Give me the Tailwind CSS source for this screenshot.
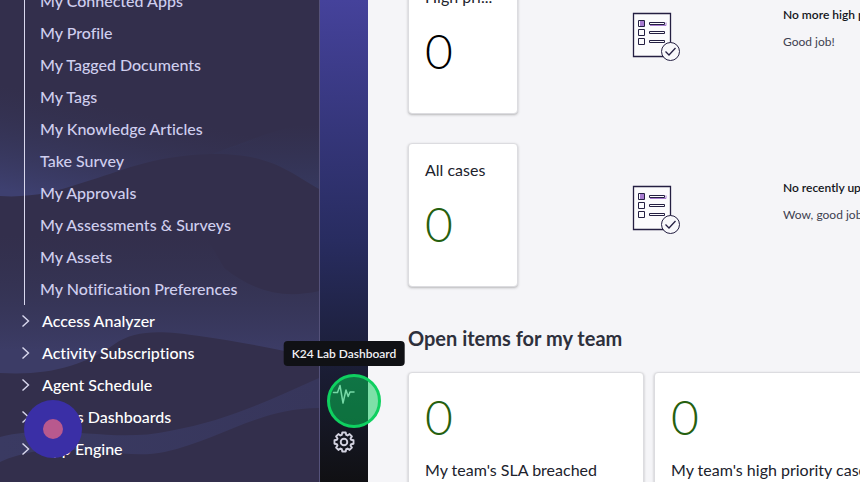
<!DOCTYPE html>
<html lang="en">
<head>
<meta charset="utf-8">
<title>Workspace</title>
<script src="https://cdn.jsdelivr.net/npm/@tailwindcss/browser@4"></script>
</head>
<body class="flex h-screen overflow-hidden bg-[#f5f5f8] font-[Lato,'Noto_Sans',sans-serif] text-[#20222c] [font-variant-ligatures:no-common-ligatures]">

<aside class="relative isolate w-80 shrink-0 overflow-hidden border-r border-[#55527a] bg-[#332f4c]">
  <svg class="absolute inset-0 -z-10 h-full w-full" viewBox="0 0 320 482" preserveAspectRatio="none" aria-hidden="true">
    <defs>
      <linearGradient id="w1" gradientUnits="userSpaceOnUse" x1="50" y1="95" x2="30" y2="195"><stop offset="0" stop-color="#35375a" stop-opacity="0"/><stop offset="1" stop-color="#3e4070"/></linearGradient>
      <linearGradient id="w2" gradientUnits="userSpaceOnUse" x1="0" y1="235" x2="0" y2="350"><stop offset="0" stop-color="#343656" stop-opacity="0"/><stop offset="1" stop-color="#3c3c66"/></linearGradient>
      <linearGradient id="w3" gradientUnits="userSpaceOnUse" x1="0" y1="0" x2="320" y2="0"><stop offset="0" stop-color="#3a3a62"/><stop offset="1" stop-color="#37365b"/></linearGradient>
      <linearGradient id="w4" gradientUnits="userSpaceOnUse" x1="0" y1="125" x2="0" y2="188"><stop offset="0" stop-color="#34365a" stop-opacity="0"/><stop offset="1" stop-color="#36385e"/></linearGradient>
    </defs>
    <path fill="url(#w1)" d="M0 60 L200 60 L320 125 C270 138 240 145 212 154 C150 156 120 172 85 182 C55 192 30 198 0 196Z"/>
    <path fill="url(#w4)" d="M212 154 C240 145 270 130 320 120 V189 C290 172 270 153 212 154Z"/>
    <path fill="url(#w2)" d="M0 225 L200 225 L225 268 C255 292 285 299 320 291 V358 C290 352 250 343 200 336 C160 330 135 330 115 344 C85 365 50 376 0 373Z"/>
    <path fill="url(#w3)" d="M0 437 C60 422 110 444 170 431 C230 420 270 400 320 378 V408 C260 408 220 440 165 452 C120 462 60 435 0 462Z"/>
  </svg>
  <nav aria-label="All applications" class="-mt-[15px] font-medium">
    <ul class="ml-6 border-l border-[#d9d8ee] pl-[15px] text-base leading-8 text-[#cfceee]">
      <li><a href="#">My Connected Apps</a></li>
      <li><a href="#">My Profile</a></li>
      <li><a href="#">My Tagged Documents</a></li>
      <li><a href="#">My Tags</a></li>
      <li><a href="#">My Knowledge Articles</a></li>
      <li><a href="#">Take Survey</a></li>
      <li><a href="#">My Approvals</a></li>
      <li><a href="#">My Assessments &amp; Surveys</a></li>
      <li><a href="#">My Assets</a></li>
      <li><a href="#">My Notification Preferences</a></li>
    </ul>
    <ul class="pl-5 text-base leading-8 text-white">
      <li><button class="flex items-center gap-2.5"><svg class="h-3 w-3" viewBox="0 0 12 12" fill="none" stroke="#d9d8ee" stroke-width="1.4"><path d="M2.5 .5 8.5 6 2.5 11.5"/></svg>Access Analyzer</button></li>
      <li><button class="flex items-center gap-2.5"><svg class="h-3 w-3" viewBox="0 0 12 12" fill="none" stroke="#d9d8ee" stroke-width="1.4"><path d="M2.5 .5 8.5 6 2.5 11.5"/></svg>Activity Subscriptions</button></li>
      <li><button class="flex items-center gap-2.5"><svg class="h-3 w-3" viewBox="0 0 12 12" fill="none" stroke="#d9d8ee" stroke-width="1.4"><path d="M2.5 .5 8.5 6 2.5 11.5"/></svg>Agent Schedule</button></li>
      <li><button class="flex items-center gap-2.5"><svg class="h-3 w-3" viewBox="0 0 12 12" fill="none" stroke="#d9d8ee" stroke-width="1.4"><path d="M2.5 .5 8.5 6 2.5 11.5"/></svg>Alerts Dashboards</button></li>
      <li><button class="flex items-center gap-2.5"><svg class="h-3 w-3" viewBox="0 0 12 12" fill="none" stroke="#d9d8ee" stroke-width="1.4"><path d="M2.5 .5 8.5 6 2.5 11.5"/></svg>App Engine</button></li>
    </ul>
  </nav>
  <button aria-label="Record" class="absolute bottom-6 left-6 flex size-[58px] items-center justify-center rounded-full bg-[#3a2fa6]"><span class="size-5 rounded-full bg-[#b8598e]"></span></button>
</aside>

<div class="relative z-10 flex w-12 shrink-0 flex-col items-center justify-end gap-4 bg-linear-to-b from-[#45429b] via-[#282c60] to-[#101013] pb-6">
  <button aria-label="K24 Lab Dashboard" class="relative flex size-8 items-center justify-center">
    <svg class="h-5 w-6" viewBox="0 0 24 20" fill="none" stroke="#e6e6f4" stroke-width="1.500" stroke-linejoin="round" stroke-linecap="round"><path d="M1.500 8.500H5.500L8 1.500 11 19 14 6 16.200 12.500 18 8H22"/></svg>
    <span class="absolute -top-1 -left-px size-[54px] rounded-full border-[3px] border-[#0fd060] bg-[#05cc58]/50"></span>
    <span role="tooltip" class="absolute -top-[37px] left-1/2 -translate-x-1/2 rounded bg-[#101115] px-2 text-xs leading-[25px] font-semibold whitespace-nowrap text-[#f0f0f4]">K24 Lab Dashboard</span>
  </button>
  <button aria-label="Settings" class="flex size-8 items-center justify-center">
    <svg class="size-[22px]" viewBox="0 0 22 22" fill="none" stroke="#d2d1df" stroke-width="1.900" stroke-linejoin="round"><path d="M9.300 1.500h3.400l.5 2.400 1.300.6 2.100-1.400 2.300 2.300-1.400 2.100.6 1.300 2.400.5v3.400l-2.400.5-.6 1.300 1.400 2.100-2.300 2.300-2.100-1.400-1.300.6-.5 2.400H9.300l-.5-2.400-1.300-.6-2.100 1.400-2.300-2.300 1.400-2.100-.6-1.300-2.400-.5V9.300l2.400-.5.6-1.300-1.400-2.100 2.300-2.300 2.100 1.400 1.300-.6z"/><circle cx="11" cy="11" r="3.300"/></svg>
  </button>
</div>

<main class="min-w-0 flex-1 overflow-hidden pl-10">
  <div class="-mt-[30px] flex flex-col gap-[29px]">
    <section class="flex">
      <a href="#" class="block h-36 w-[110px] shrink-0 rounded border border-[#dcdce0] bg-white px-4 pt-4 shadow-sm shadow-black/20">
        <h3 class="text-base leading-5">High pri...</h3>
        <p class="mt-3.5 text-5xl leading-[60px] font-light text-black">0</p>
      </a>
      <svg class="mt-[42px] ml-[114px] h-[50px] w-12 shrink-0" viewBox="0 0 48 50" fill="none" stroke="#241f42"><path d="M1.500 1.500h37v43h-37z" fill="#fbfbfd" stroke-width="1.300"/><path d="M8 9h5v5H8z" fill="#a77bd0" stroke="none"/><path d="M6.500 8.500h6v6h-6zM6.500 17.500h6v6h-6zM6.500 26.500h6v6h-6zM17.500 10.500h15v2h-15zM17.500 19.500h15v2h-15zM17.500 28.500h15v2h-15z"/><path d="M18 13.500h16v-3" stroke="#a77bd0"/><circle cx="38.500" cy="39.500" r="9" fill="#f8f8fb"/><path d="M33.500 39.500 37 43l6.500-7" stroke-width="1.300"/></svg>
      <div class="mt-[37px] ml-[103px] text-xs leading-4 whitespace-nowrap">
        <p class="font-semibold text-[#14151c]">No more high priority cases</p>
        <p class="mt-[11px] text-[#3e4150]">Good job!</p>
      </div>
    </section>
    <section class="flex">
      <a href="#" class="block h-36 w-[110px] shrink-0 rounded border border-[#dcdce0] bg-white px-4 pt-4 shadow-sm shadow-black/20">
        <h3 class="text-base leading-5">All cases</h3>
        <p class="mt-3.5 text-5xl leading-[60px] font-light text-[#26600f]">0</p>
      </a>
      <svg class="mt-[42px] ml-[114px] h-[50px] w-12 shrink-0" viewBox="0 0 48 50" fill="none" stroke="#241f42"><path d="M1.500 1.500h37v43h-37z" fill="#fbfbfd" stroke-width="1.300"/><path d="M8 9h5v5H8z" fill="#a77bd0" stroke="none"/><path d="M6.500 8.500h6v6h-6zM6.500 17.500h6v6h-6zM6.500 26.500h6v6h-6zM17.500 10.500h15v2h-15zM17.500 19.500h15v2h-15zM17.500 28.500h15v2h-15z"/><path d="M18 13.500h16v-3" stroke="#a77bd0"/><circle cx="38.500" cy="39.500" r="9" fill="#f8f8fb"/><path d="M33.500 39.500 37 43l6.500-7" stroke-width="1.300"/></svg>
      <div class="mt-[37px] ml-[103px] text-xs leading-4 whitespace-nowrap">
        <p class="font-semibold text-[#14151c]">No recently updated cases</p>
        <p class="mt-[11px] text-[#3e4150]">Wow, good job!</p>
      </div>
    </section>
  </div>
  <h2 class="mt-[35px] text-xl leading-8 font-bold text-[#2e303c]">Open items for my team</h2>
  <div class="mt-[18px] flex gap-2.5">
    <a href="#" class="block h-36 w-[236px] shrink-0 rounded border border-[#dcdce0] bg-white px-4 pt-3.5 shadow-sm shadow-black/20">
      <p class="text-5xl leading-[60px] font-light text-[#26600f]">0</p>
      <h3 class="mt-[13px] text-base leading-5">My team's SLA breached</h3>
    </a>
    <a href="#" class="block h-36 w-[236px] shrink-0 rounded border border-[#dcdce0] bg-white px-4 pt-3.5 whitespace-nowrap shadow-sm shadow-black/20">
      <p class="text-5xl leading-[60px] font-light text-[#26600f]">0</p>
      <h3 class="mt-[13px] text-base leading-5">My team's high priority cases</h3>
    </a>
  </div>
</main>
</body>
</html>
